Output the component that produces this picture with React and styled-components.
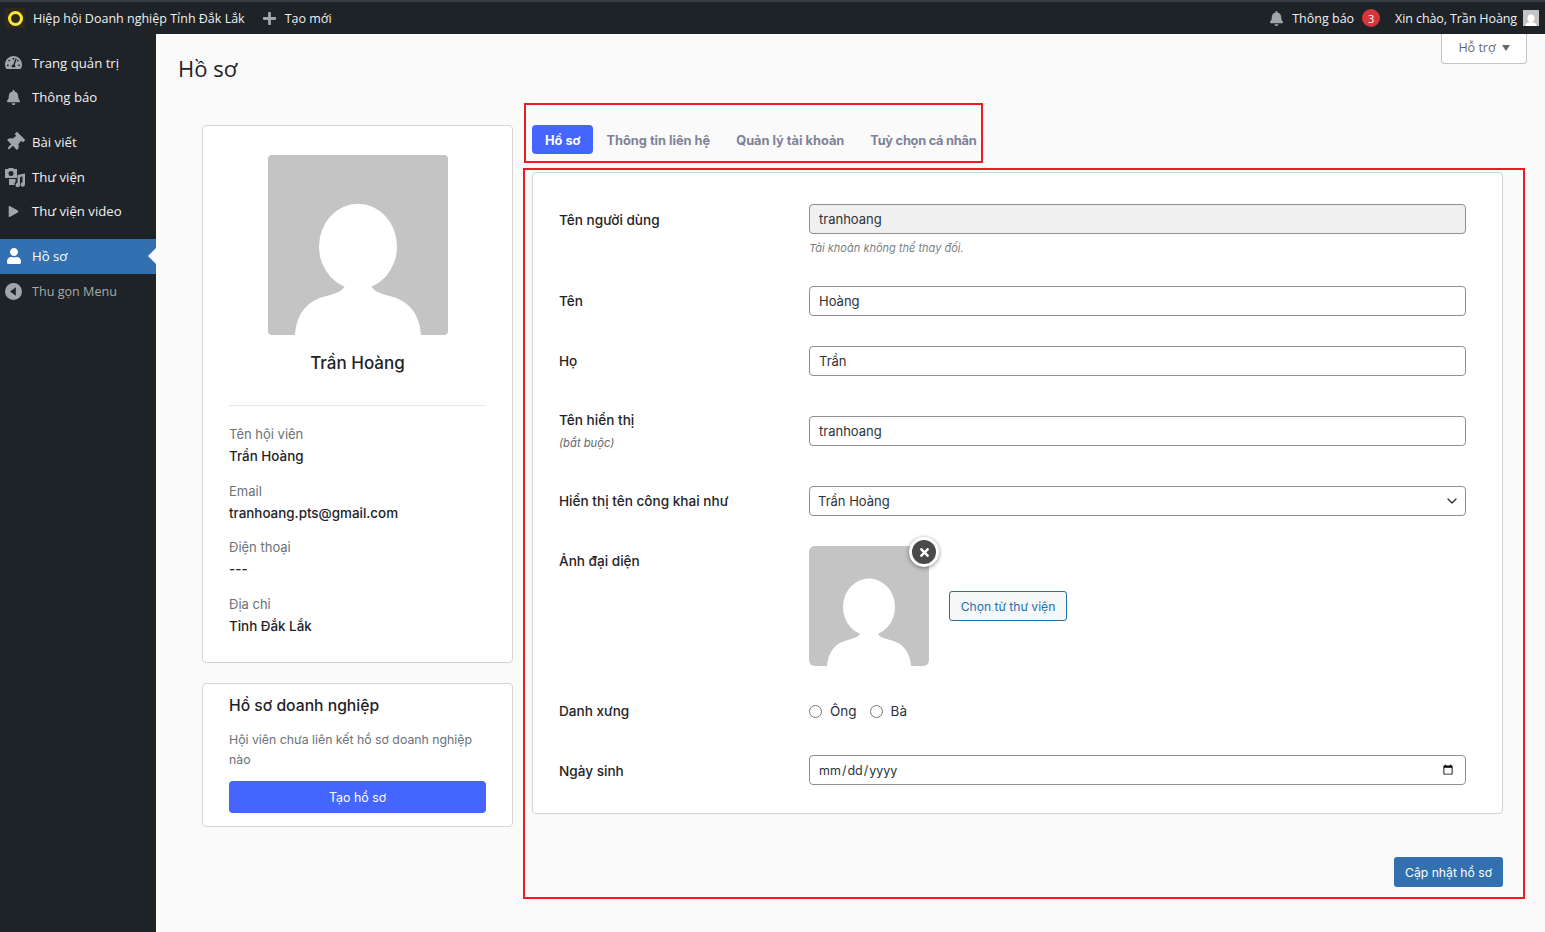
import React from 'react'
import styled, { createGlobalStyle } from 'styled-components'
import { FaBell, FaPlay, FaPlus, FaTachometerAlt, FaThumbtack, FaUser, FaTimes } from 'react-icons/fa'
import { FiChevronDown } from 'react-icons/fi'

const Global = createGlobalStyle`
  * { box-sizing: border-box; }
  html, body { margin: 0; height: 100%; }
  body {
    background: #fafafa;
    color: #1f2328;
    font-family: Inter, 'Liberation Sans', sans-serif;
    font-size: 13px;
    overflow: hidden;
  }
`

const MediaIcon = () => (
  <svg width='20' height='20' viewBox='0 0 20 20' fill='currentColor'>
    <path fillRule='evenodd' d='M0 2h3l1-1h4l1 1h3v9H0V2zm6 2a2.500 2.500 0 1 0 0 5 2.500 2.500 0 0 0 0-5z' />
    <path d='M20 6.500v11a2.200 2.200 0 1 1-2.500-2.200V9.500L15 10v8a2.200 2.200 0 1 1-2.500-2.200V8l7.500-1.500z' />
    <path d='M4 12h6.500v2.800a3.500 3.500 0 0 0-1 3.200H4z' />
  </svg>
)

const CollapseIcon = () => (
  <svg width='17' height='17' viewBox='0 0 17 17'>
    <circle cx='8.500' cy='8.500' r='8.500' fill='currentColor' />
    <path d='M10.800 4.200v8.600L5 8.500z' fill='#1d2327' />
  </svg>
)

const Silhouette = ({ size, radius }) => (
  <svg width={size} height={size} viewBox='0 0 120 120' style={{ borderRadius: radius, display: 'block' }}>
    <rect width='120' height='120' fill='#c4c4c4' />
    <ellipse cx='60' cy='61' rx='26' ry='28.500' fill='#fff' />
    <path d='M18 120c1-14 8-23 21-26 7-2 11-3 13-8h16c2 5 6 6 13 8 13 3 20 12 21 26z' fill='#fff' />
  </svg>
)

const menu = [
  { label: 'Trang quản trị', icon: <FaTachometerAlt size={17} /> },
  { label: 'Thông báo', icon: <FaBell size={15} style={{ marginLeft: 1 }} /> },
  { label: 'Bài viết', icon: <FaThumbtack size={19} style={{ transform: 'rotate(45deg)' }} />, gap: true },
  { label: 'Thư viện', icon: <MediaIcon /> },
  { label: 'Thư viện video', icon: <FaPlay size={11} style={{ marginLeft: 3 }} /> },
  { label: 'Hồ sơ', icon: <FaUser size={16} style={{ marginLeft: 1 }} />, active: true, gap: true },
  { label: 'Thu gọn Menu', icon: <CollapseIcon />, muted: true },
]

const memberInfo = [
  ['Tên hội viên', 'Trần Hoàng'],
  ['Email', 'tranhoang.pts@gmail.com'],
  ['Điện thoại', '---'],
  ['Địa chỉ', 'Tỉnh Đắk Lắk'],
]

const tabs = ['Hồ sơ', 'Thông tin liên hệ', 'Quản lý tài khoản', 'Tuỳ chọn cá nhân']

const App = () => {
  return (
    <>
      <Global />
      <TopBar>
        <BarGroup>
          <Logo><span /></Logo>
          <BarText>Hiệp hội Doanh nghiệp Tỉnh Đắk Lắk</BarText>
          <BarIcon $left={17}><FaPlus size={15} /></BarIcon>
          <BarText>Tạo mới</BarText>
        </BarGroup>
        <BarGroup>
          <BarIcon><FaBell size={15} /></BarIcon>
          <BarText>Thông báo</BarText>
          <Badge>3</Badge>
          <BarText $left={15} $tight>Xin chào, Trần Hoàng</BarText>
          <BarAvatar><Silhouette size={16} radius={0} /></BarAvatar>
        </BarGroup>
      </TopBar>
      <Body>
        <Sidebar>
          {menu.map((item) => (
            <MenuItem key={item.label} $active={item.active} $gap={item.gap} $muted={item.muted}>
              <MenuIcon $active={item.active}>{item.icon}</MenuIcon>
              {item.label}
            </MenuItem>
          ))}
        </Sidebar>
        <Main>
          <HelpButton>Hỗ trợ <Caret /></HelpButton>
          <Title>Hồ sơ</Title>
          <Columns>
            <LeftColumn>
              <Card>
                <ProfileTop>
                  <Silhouette size={180} radius={4} />
                  <ProfileName>Trần Hoàng</ProfileName>
                </ProfileTop>
                <Divider />
                {memberInfo.map(([label, value]) => (
                  <InfoBlock key={label}>
                    <InfoLabel>{label}</InfoLabel>
                    <InfoValue>{value}</InfoValue>
                  </InfoBlock>
                ))}
              </Card>
              <CompanyCard>
                <CompanyTitle>Hồ sơ doanh nghiệp</CompanyTitle>
                <CompanyText>Hội viên chưa liên kết hồ sơ doanh nghiệp nào</CompanyText>
                <CreateButton>Tạo hồ sơ</CreateButton>
              </CompanyCard>
            </LeftColumn>
            <RightColumn>
              <TabsBox>
                {tabs.map((tab, i) => (
                  <Tab key={tab} $active={i === 0}>{tab}</Tab>
                ))}
              </TabsBox>
              <FormBox>
                <FormCard>
                  <Row>
                    <Label $top={6}>Tên người dùng</Label>
                    <Field>
                      <Input value='tranhoang' disabled readOnly />
                      <Hint>Tài khoản không thể thay đổi.</Hint>
                    </Field>
                  </Row>
                  <Row>
                    <Label>Tên</Label>
                    <Field><Input defaultValue='Hoàng' /></Field>
                  </Row>
                  <Row>
                    <Label>Họ</Label>
                    <Field><Input defaultValue='Trần' /></Field>
                  </Row>
                  <Row $height={50}>
                    <Label $top={4}>
                      Tên hiển thị
                      <Required>(bắt buộc)</Required>
                    </Label>
                    <Field $top={10}><Input defaultValue='tranhoang' /></Field>
                  </Row>
                  <Row>
                    <Label>Hiển thị tên công khai như</Label>
                    <Field>
                      <SelectWrap>
                        <Select defaultValue='Trần Hoàng'>
                          <option>Trần Hoàng</option>
                          <option>tranhoang</option>
                        </Select>
                        <SelectArrow><FiChevronDown size={16} /></SelectArrow>
                      </SelectWrap>
                    </Field>
                  </Row>
                  <Row>
                    <Label>Ảnh đại diện</Label>
                    <AvatarField>
                      <AvatarBox>
                        <Silhouette size={120} radius={6} />
                        <RemoveButton><FaTimes size={13} /></RemoveButton>
                      </AvatarBox>
                      <LibraryButton>Chọn từ thư viện</LibraryButton>
                    </AvatarField>
                  </Row>
                  <Row $gap={29}>
                    <Label>Danh xưng</Label>
                    <RadioField>
                      <RadioLabel><input type='radio' name='title' />Ông</RadioLabel>
                      <RadioLabel><input type='radio' name='title' />Bà</RadioLabel>
                    </RadioField>
                  </Row>
                  <Row $gap={0}>
                    <Label $top={6}>Ngày sinh</Label>
                    <Field><DateInput type='date' /></Field>
                  </Row>
                </FormCard>
                <SubmitRow>
                  <SubmitButton>Cập nhật hồ sơ</SubmitButton>
                </SubmitRow>
              </FormBox>
            </RightColumn>
          </Columns>
        </Main>
      </Body>
    </>
  )
}

const wpFont = `'Open Sans', 'Noto Sans', sans-serif`

const TopBar = styled.header`
  height: 34px;
  background: #1d2327;
  border-top: 2px solid #3a3d40;
  padding: 0 6px 0 5px;
  display: flex;
  align-items: center;
  justify-content: space-between;
  color: #f0f0f1;
  font-family: ${wpFont};
  font-size: 12.500px;
`

const BarGroup = styled.div`
  display: flex;
  align-items: center;
`

const Logo = styled.div`
  width: 20px;
  height: 20px;
  background: #33271a;
  margin-right: 8px;
  display: flex;
  align-items: center;
  justify-content: center;

  span {
    width: 15px;
    height: 15px;
    border-radius: 50%;
    border: 3px solid #f2e93c;
  }
`

const BarText = styled.span`
  margin-left: ${(p) => p.$left || 0}px;
  letter-spacing: ${(p) => (p.$tight ? '-0.1px' : 'normal')};
  white-space: nowrap;
`

const BarIcon = styled.span`
  display: flex;
  color: #a0a5aa;
  margin-left: ${(p) => p.$left || 0}px;
  margin-right: 8px;
`

const Badge = styled.span`
  width: 18px;
  height: 18px;
  margin-left: 8px;
  border-radius: 50%;
  background: #d63638;
  color: #fff;
  font-size: 11px;
  display: flex;
  align-items: center;
  justify-content: center;
`

const BarAvatar = styled.span`
  margin-left: 6px;
  display: block;
`

const Body = styled.div`
  display: flex;
  height: calc(100vh - 34px);
`

const Sidebar = styled.nav`
  width: 156px;
  flex: none;
  background: #1d2327;
  padding-top: 11.500px;
  font-family: ${wpFont};
  font-size: 13.200px;
`

const MenuItem = styled.div`
  position: relative;
  height: 34.500px;
  margin-top: ${(p) => (p.$gap ? 10.500 : 0)}px;
  padding-top: ${(p) => (p.$muted ? 1 : 0)}px;
  display: flex;
  align-items: center;
  background: ${(p) => (p.$active ? '#3270b2' : 'transparent')};
  color: ${(p) => (p.$active ? '#fff' : p.$muted ? '#a7aaad' : '#f0f0f1')};
  font-size: ${(p) => (p.$muted ? '12.600px' : 'inherit')};

  ${(p) =>
    p.$active &&
    `&::after {
      content: '';
      position: absolute;
      right: 0;
      top: 50%;
      margin-top: -8px;
      border: 8px solid transparent;
      border-left-width: 0;
      border-right-color: #fafafa;
    }`}
`

const MenuIcon = styled.span`
  width: 32px;
  padding-left: 5px;
  flex: none;
  display: flex;
  align-items: center;
  color: ${(p) => (p.$active ? '#fff' : '#a0a5aa')};
`

const Main = styled.main`
  position: relative;
  flex: 1;
  min-width: 0;
  padding: 20px 20px 0 22px;
`

const HelpButton = styled.div`
  position: absolute;
  top: 0;
  right: 18px;
  width: 86px;
  height: 30px;
  background: #fff;
  border: 1px solid #c3c4c7;
  border-top: 0;
  border-radius: 0 0 4px 4px;
  color: #646970;
  font-family: ${wpFont};
  font-size: 12.500px;
  padding-bottom: 2px;
  display: flex;
  align-items: center;
  justify-content: center;
  gap: 6px;
`

const Caret = styled.i`
  border: 4.500px solid transparent;
  border-top: 6px solid #646970;
  border-bottom: 0;
`

const Title = styled.h1`
  margin: 0;
  height: 30px;
  line-height: 28px;
  font-family: ${wpFont};
  font-size: 22px;
  font-weight: 400;
  color: #1d2327;
`

const Columns = styled.div`
  display: grid;
  grid-template-columns: 311px 1002px;
  column-gap: 10px;
  margin: 19px 0 0 24px;
`

const LeftColumn = styled.div`
  padding-top: 22px;
  display: flex;
  flex-direction: column;
  gap: 20px;
`

const RightColumn = styled.div`
  display: flex;
  flex-direction: column;
  gap: 5px;
`

const Card = styled.section`
  background: #fff;
  border: 1px solid #d4d4d6;
  border-radius: 4px;
  padding: 29px 26px 0;
  height: 538px;
`

const ProfileTop = styled.div`
  display: flex;
  flex-direction: column;
  align-items: center;
`

const ProfileName = styled.div`
  margin-top: 17px;
  font-size: 17px;
  font-weight: 500;
  line-height: 22px;
  color: #1f2328;
`

const Divider = styled.hr`
  border: 0;
  border-top: 1px solid #e6e6e6;
  margin: 31px 0 18px;
`

const InfoBlock = styled.div`
  height: 56.700px;
`

const InfoLabel = styled.div`
  color: #6c7177;
  font-size: 13px;
  line-height: 20px;
`

const InfoValue = styled.div`
  color: #1f2328;
  font-weight: 500;
  font-size: 13.400px;
  line-height: 20px;
  margin-top: 2px;
`

const CompanyCard = styled(Card)`
  height: 144px;
  padding: 12px 26px 0;
`

const CompanyTitle = styled.div`
  font-size: 15.700px;
  font-weight: 500;
  line-height: 20px;
`

const CompanyText = styled.div`
  margin-top: 14px;
  color: #6c7177;
  font-size: 12.300px;
  line-height: 20px;
`

const CreateButton = styled.button`
  width: 100%;
  height: 32px;
  margin-top: 11px;
  background: #4466ff;
  border: 0;
  border-radius: 4px;
  color: #fff;
  font-family: inherit;
  font-size: 12.400px;
`

const TabsBox = styled.div`
  width: 459px;
  height: 60px;
  margin-left: 1px;
  padding: 20px 0 0 6px;
  border: 2px solid #ed1c24;
  display: flex;
  align-items: flex-start;
`

const Tab = styled.div`
  height: 29px;
  padding: 0 13px;
  border-radius: 4px;
  background: ${(p) => (p.$active ? '#4466ff' : 'transparent')};
  color: ${(p) => (p.$active ? '#fff' : '#7e8299')};
  font-size: 12.800px;
  font-weight: 700;
  line-height: 31px;
  white-space: nowrap;

  &:last-child {
    letter-spacing: -0.25px;
  }
`

const FormBox = styled.div`
  height: 731px;
  border: 2px solid #ed1c24;
  padding: 2px 20px 10px 7px;
`

const FormCard = styled.section`
  height: 642px;
  background: #fff;
  border: 1px solid #d4d4d6;
  border-radius: 4px;
  padding: 31px 36px 0 26px;
`

const Row = styled.div`
  display: grid;
  grid-template-columns: 250px 1fr;
  min-height: ${(p) => p.$height || 0}px;
  margin-bottom: ${(p) => p.$gap ?? 30}px;
`

const Label = styled.label`
  padding-top: ${(p) => p.$top ?? 5}px;
  font-weight: 500;
  font-size: 13.600px;
  line-height: 20px;
  color: #1f2328;
`

const Required = styled.em`
  display: block;
  margin-top: 3px;
  color: #646970;
  font-size: 11.200px;
  font-weight: 400;
`

const Field = styled.div`
  padding-top: ${(p) => p.$top || 0}px;
`

const Input = styled.input`
  display: block;
  width: 100%;
  height: 30px;
  padding: 0 9px 1px;
  border: 1px solid #8c8f94;
  border-radius: 4px;
  background: ${(p) => (p.disabled ? '#f0f0f1' : '#fff')};
  color: #2c3338;
  font-family: inherit;
  font-size: 13px;
  opacity: 1;
`

const DateInput = styled(Input)`
  font-size: 12.500px;
  padding: 0 9px 0 8px;
`

const Hint = styled.p`
  margin: 6px 0 0;
  height: 16px;
  line-height: 16px;
  color: #7a7f85;
  font-size: 11px;
  font-style: italic;
`

const SelectWrap = styled.div`
  position: relative;
`

const Select = styled.select`
  display: block;
  width: 100%;
  height: 30px;
  padding: 0 24px 0 8px;
  appearance: none;
  border: 1px solid #8c8f94;
  border-radius: 4px;
  background: #fff;
  color: #2c3338;
  font-family: inherit;
  font-size: 13px;
`

const SelectArrow = styled.span`
  position: absolute;
  right: 6px;
  top: 7px;
  display: flex;
  color: #2c3338;
  pointer-events: none;
`

const AvatarField = styled.div`
  display: flex;
  align-items: center;
  gap: 20px;
`

const AvatarBox = styled.div`
  position: relative;
  width: 120px;
  height: 120px;
`

const RemoveButton = styled.span`
  position: absolute;
  top: -9px;
  right: -10px;
  width: 30px;
  height: 30px;
  border-radius: 50%;
  border: 3px solid #fff;
  background: #4a4a4a;
  color: #fff;
  box-shadow: 0 1px 4px rgba(0, 0, 0, 0.45);
  display: flex;
  align-items: center;
  justify-content: center;
`

const LibraryButton = styled.button`
  height: 30px;
  width: 118px;
  padding: 0;
  background: #f6f7f7;
  border: 1px solid #2271b1;
  border-radius: 3px;
  color: #2271b1;
  font-family: inherit;
  font-size: 12.100px;
`

const RadioField = styled.div`
  height: 30px;
  display: flex;
  align-items: center;
  gap: 13px;
`

const RadioLabel = styled.label`
  display: flex;
  align-items: center;
  gap: 8px;
  color: #2c3338;
  font-size: 13.500px;

  input {
    margin: 0;
    width: 13px;
    height: 13px;
  }
`

const SubmitRow = styled.div`
  display: flex;
  justify-content: flex-end;
  margin-top: 43px;
`

const SubmitButton = styled.button`
  height: 30px;
  width: 109px;
  padding: 0;
  background: #3270b0;
  border: 0;
  border-radius: 3px;
  color: #fff;
  font-family: inherit;
  font-size: 12.200px;
`

export default App
